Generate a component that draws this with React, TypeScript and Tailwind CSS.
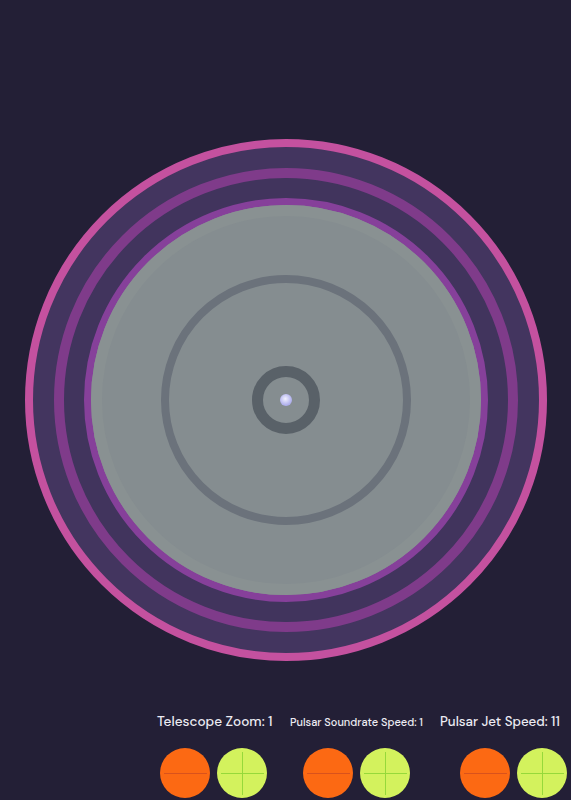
import React from "react";

const font = { fontFamily: '"DM Sans", Inter, "Noto Sans", sans-serif' };

function MinusButton() {
  return (
    <button className="relative w-[50px] h-[50px] rounded-full bg-[#fc6913] flex items-center justify-center">
      <span className="block w-[43px] h-px bg-[#d9521c]" />
    </button>
  );
}

function PlusButton() {
  return (
    <button className="relative w-[50px] h-[50px] rounded-full bg-[#d3f25d] flex items-center justify-center">
      <span className="block w-[43px] h-px bg-[#96d93a]" />
      <span className="absolute left-1/2 top-[4px] w-px h-[43px] bg-[#96d93a]" />
    </button>
  );
}

type Control = {
  label: string;
  size: string;
  btnPad: string;
  width: string;
};

const CONTROLS: Control[] = [
  { label: "Telescope Zoom: 1", size: "text-[13.6px]", btnPad: "pl-[3px]", width: "w-[133px]" },
  { label: "Pulsar Soundrate Speed: 1", size: "text-[11px]", btnPad: "pl-[13px]", width: "w-[150px]" },
  { label: "Pulsar Jet Speed: 11", size: "text-[13.3px]", btnPad: "pl-[20px]", width: "w-[131px]" },
];

export default function App() {
  return (
    <div className="w-full h-[800px] bg-[#231f36] flex flex-col items-center overflow-hidden" style={font}>
      {/* Pulsar disc */}
      <div className="mt-[139px] w-[522px] h-[522px] rounded-full border-[8px] border-[#c4519f] bg-[#43355f] flex items-center justify-center">
        <div className="w-[464px] h-[464px] rounded-full border-[10px] border-[#7f3b8a] bg-[#41345d] flex items-center justify-center">
          <div className="w-[404px] h-[404px] rounded-full border-[7px] border-[#86409a] bg-[#858d90] flex items-center justify-center">
            <div className="w-[390px] h-[390px] rounded-full border-[11px] border-[#899192] flex items-center justify-center">
              <div className="w-[250px] h-[250px] rounded-full border-[8px] border-[#6b727b] flex items-center justify-center">
                <div className="w-[68px] h-[68px] rounded-full border-[11px] border-[#596168] flex items-center justify-center">
                  <div className="w-[12px] h-[12px] rounded-full bg-[radial-gradient(circle_at_45%_40%,#f2f2ff,#b4b4ee_60%,#9a9ae0)]" />
                </div>
              </div>
            </div>
          </div>
        </div>
      </div>

      {/* Controls */}
      <div className="w-full flex mt-[51px] pl-[157px]">
        {CONTROLS.map((c) => (
          <div key={c.label} className={"flex flex-col shrink-0 " + c.width}>
            <div className={"h-[20px] flex items-center text-[#ecebf2] font-medium whitespace-nowrap " + c.size}>
              {c.label}
            </div>
            <div className={"mt-[16px] flex gap-[7px] " + c.btnPad}>
              <MinusButton />
              <PlusButton />
            </div>
          </div>
        ))}
      </div>
    </div>
  );
}
